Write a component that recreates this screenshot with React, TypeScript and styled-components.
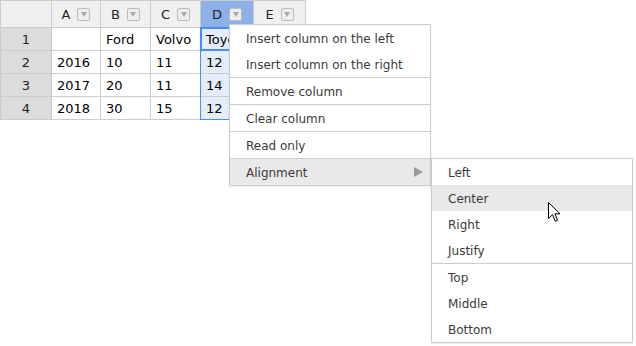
import React from 'react';
import styled, { createGlobalStyle } from 'styled-components';

const Global = createGlobalStyle`
  html, body { margin: 0; padding: 0; background: #fff; }
  body { font-family: "DejaVu Sans", Verdana, sans-serif; }
`;

const Page = styled.div`
  position: relative;
  width: 636px;
  height: 346px;
  overflow: hidden;
`;

const Sheet = styled.div`
  display: inline-flex;
  flex-direction: column;
  border-left: 1px solid #ccc;
  border-top: 1px solid #ccc;
  font-size: 13px;
  color: #000;
`;

const Row = styled.div<{ $h: number }>`
  display: flex;
  height: ${(p) => p.$h}px;
`;

const Cell = styled.div<{ $w: number; $sel?: boolean }>`
  box-sizing: border-box;
  width: ${(p) => p.$w}px;
  height: 100%;
  border-right: 1px solid #ccc;
  border-bottom: 1px solid #ccc;
  background: ${(p) => (p.$sel ? '#e5edfd' : '#fff')};
  display: flex;
  align-items: center;
  padding: 0 4px 0 5px;
  white-space: nowrap;
  overflow: hidden;
`;

const RowHead = styled(Cell)`
  background: #dcdcdc;
  justify-content: center;
  padding: 0;
  color: #222;
`;

const ColHead = styled(Cell)<{ $active?: boolean }>`
  background: ${(p) => (p.$active ? '#8db0e8' : '#f0f0f0')};
  justify-content: center;
  gap: 7px;
  padding: 0;
  color: #222;
`;

const DropBtn = styled.span`
  box-sizing: border-box;
  width: 13px;
  height: 13px;
  border: 1px solid #bbb;
  border-radius: 2px;
  background: #eee;
  display: flex;
  align-items: center;
  justify-content: center;
  &::after {
    content: '';
    border-left: 3px solid transparent;
    border-right: 3px solid transparent;
    border-top: 5px solid #aaa;
    margin-top: 1px;
  }
`;

const SelectionBox = styled.div`
  position: absolute;
  left: 200px;
  top: 27px;
  width: 54px;
  height: 93px;
  box-sizing: border-box;
  border: 1px solid #4b89ff;
  pointer-events: none;
`;

const CurrentBox = styled.div`
  position: absolute;
  left: 200px;
  top: 27px;
  width: 54px;
  height: 24px;
  box-sizing: border-box;
  border: 2px solid #4b89ff;
  pointer-events: none;
`;

const Menu = styled.div<{ $x: number; $y: number }>`
  position: absolute;
  left: ${(p) => p.$x}px;
  top: ${(p) => p.$y}px;
  width: 202px;
  box-sizing: border-box;
  background: #fff;
  border: 1px solid #ccc;
  box-shadow: 0 1px 2px rgba(0, 0, 0, 0.08);
  display: flex;
  flex-direction: column;
  font-size: 12px;
  color: #3b3b3b;
`;

const Item = styled.div<{ $hover?: boolean }>`
  box-sizing: border-box;
  height: 26px;
  display: flex;
  align-items: center;
  justify-content: space-between;
  padding: 2px 7px 0 16px;
  background: ${(p) => (p.$hover ? '#e9e9e9' : 'transparent')};
  white-space: nowrap;
`;

const Sep = styled.div`
  height: 1px;
  background: #ccc;
`;

const Arrow = styled.span`
  width: 0;
  height: 0;
  margin-top: -2px;
  border-top: 5px solid transparent;
  border-bottom: 5px solid transparent;
  border-left: 9px solid #999;
`;

const Cursor = styled.svg`
  position: absolute;
  left: 548px;
  top: 202px;
`;

const widths = [51, 49, 50, 50, 53, 52];
const cols = ['A', 'B', 'C', 'D', 'E'];
const data = [
  ['', 'Ford', 'Volvo', 'Toyota', ''],
  ['2016', '10', '11', '12', ''],
  ['2017', '20', '11', '14', ''],
  ['2018', '30', '15', '12', ''],
];

export default function App() {
  return (
    <Page>
      <Global />
      <Sheet>
        <Row $h={27}>
          <ColHead $w={widths[0]} />
          {cols.map((c, i) => (
            <ColHead key={c} $w={widths[i + 1]} $active={c === 'D'}>
              {c}
              <DropBtn />
            </ColHead>
          ))}
        </Row>
        {data.map((r, ri) => (
          <Row key={ri} $h={23}>
            <RowHead $w={widths[0]}>{ri + 1}</RowHead>
            {r.map((v, ci) => (
              <Cell key={ci} $w={widths[ci + 1]} $sel={ci === 3}>
                {v}
              </Cell>
            ))}
          </Row>
        ))}
      </Sheet>
      <SelectionBox />
      <CurrentBox />
      <Menu $x={229} $y={24}>
        <Item>Insert column on the left</Item>
        <Item>Insert column on the right</Item>
        <Sep />
        <Item>Remove column</Item>
        <Sep />
        <Item>Clear column</Item>
        <Sep />
        <Item>Read only</Item>
        <Sep />
        <Item $hover>
          Alignment
          <Arrow />
        </Item>
      </Menu>
      <Menu $x={431} $y={158}>
        <Item>Left</Item>
        <Item $hover>Center</Item>
        <Item>Right</Item>
        <Item>Justify</Item>
        <Sep />
        <Item>Top</Item>
        <Item>Middle</Item>
        <Item>Bottom</Item>
      </Menu>
      <Cursor width="14" height="22" viewBox="0 0 14 22">
        <path
          d="M0.5 0.5 L0.5 16.5 L4.5 12.7 L7.3 19.3 L9.6 18.3 L6.9 11.8 L12 11.8 Z"
          fill="#fff"
          stroke="#000"
          strokeWidth="1"
          strokeLinejoin="miter"
        />
      </Cursor>
    </Page>
  );
}
